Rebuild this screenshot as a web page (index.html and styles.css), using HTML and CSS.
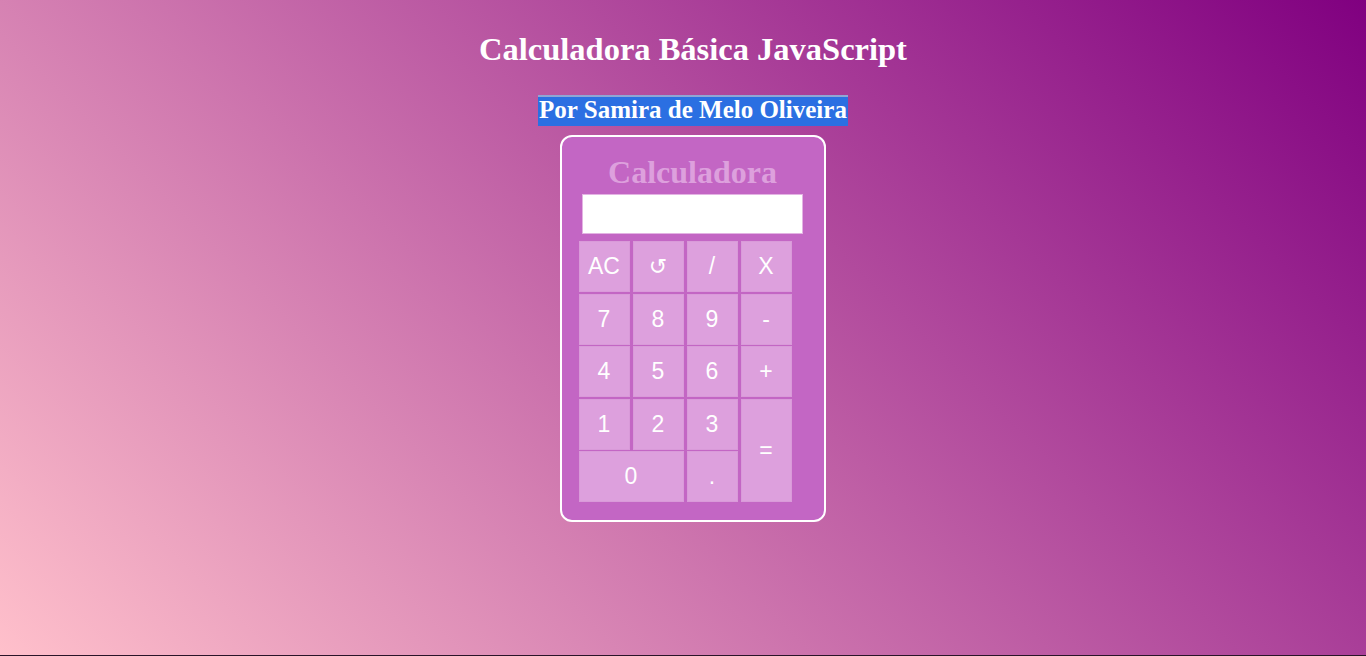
FILE: index.html
```html
<!DOCTYPE html>
<html lang="pt-BR">
<head>
<meta charset="utf-8">
<title>Calculadora Básica JavaScript</title>
<link rel="stylesheet" href="styles.css">
</head>
<body>
<main class="page">
  <h1 class="title">Calculadora Básica JavaScript</h1>
  <h2 class="author"><span class="author-text">Por Samira de Melo Oliveira</span></h2>
  <section class="calc">
    <h2 class="calc-title">Calculadora</h2>
    <input class="display" type="text" value="">
    <div class="keys">
      <button class="key">AC</button>
      <button class="key key-undo">↺</button>
      <button class="key">/</button>
      <button class="key">X</button>
      <button class="key">7</button>
      <button class="key">8</button>
      <button class="key">9</button>
      <button class="key">-</button>
      <button class="key">4</button>
      <button class="key">5</button>
      <button class="key">6</button>
      <button class="key">+</button>
      <button class="key">1</button>
      <button class="key">2</button>
      <button class="key">3</button>
      <button class="key key-equals">=</button>
      <button class="key key-zero">0</button>
      <button class="key">.</button>
    </div>
  </section>
</main>
</body>
</html>
```
FILE: styles.css
```css
html {
  background: #2a1428;
}

body {
  margin: 0;
  height: 655px;
  background: linear-gradient(45deg, #ffc0cb, #800080);
  font-family: "Liberation Serif", "Times New Roman", serif;
}

.page {
  padding: 31px 0 0 20px;
  display: flex;
  flex-direction: column;
  align-items: center;
}

.title {
  margin: 0;
  font-size: 32.5px;
  line-height: 36px;
  font-weight: bold;
  color: #ffffff;
}

.author {
  margin: 28px 0 0;
  font-size: 25px;
  line-height: 26px;
  font-weight: bold;
}

.author-text {
  display: inline-block;
  color: #ffffff;
  background: #2b6fe2;
  border-top: 2px solid #8fa6d4;
  padding: 0 1px 3px;
}

.calc {
  margin: 9px 1px 0 0;
  width: 262px;
  border: 2px solid #ffffff;
  border-radius: 12px;
  background: #c366c4;
  padding: 17px 0 18px;
  display: flex;
  flex-direction: column;
}

.calc-title {
  margin: 0;
  text-align: center;
  font-size: 32px;
  line-height: 36px;
  font-weight: bold;
  color: #dda0dd;
}

.display {
  box-sizing: border-box;
  margin: 4px 20px 0;
  width: 221px;
  height: 40px;
  border: 1px solid #e3b3e3;
  background: #ffffff;
  padding: 0 6px;
  font-family: "Liberation Sans", Arial, sans-serif;
  font-size: 22px;
  outline: none;
}

.keys {
  margin: 7px 0 0 17px;
  display: grid;
  grid-template-columns: repeat(4, 51px);
  grid-template-rows: repeat(5, 51px);
  column-gap: 3px;
  row-gap: 1.5px;
}

.key {
  box-sizing: border-box;
  margin: 0;
  padding: 0;
  border: 1px solid #d99ad9;
  background: #dda0dd;
  color: #ffffff;
  font-family: "Liberation Sans", Arial, "DejaVu Sans", sans-serif;
  font-size: 23px;
  display: flex;
  align-items: center;
  justify-content: center;
}

.key-undo {
  font-family: "DejaVu Sans", sans-serif;
  font-size: 22px;
}

.key-equals {
  grid-column: 4;
  grid-row: 4 / span 2;
}

.key-zero {
  grid-column: 1 / span 2;
}
```
